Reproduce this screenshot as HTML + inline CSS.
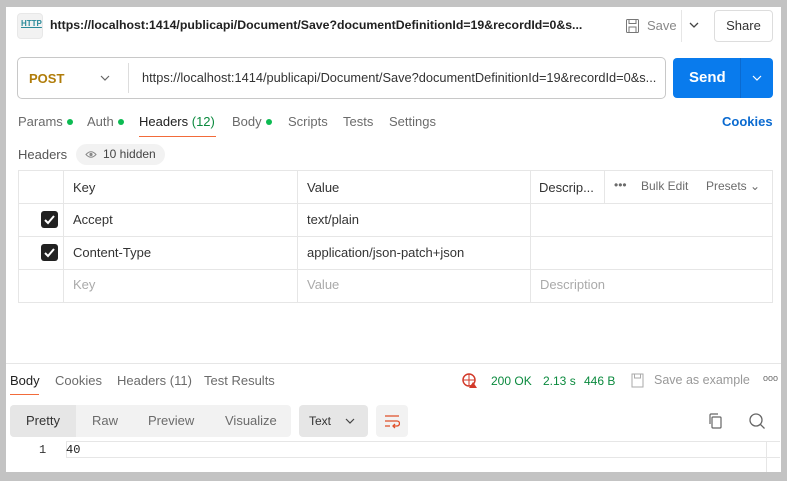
<!DOCTYPE html>
<html><head><meta charset="utf-8"><style>
*{margin:0;padding:0;box-sizing:border-box}
body{width:787px;height:481px;background:#c3c3c3;font-family:"Liberation Sans",sans-serif;position:relative;overflow:hidden;color:#212121}
.w{position:absolute;left:6px;top:7px;width:775px;height:465px;background:#fff}
.a{position:absolute;white-space:nowrap}
.g{color:#6b6b6b}
.dot{display:inline-block;width:6px;height:6px;border-radius:50%;background:#0cbb52;margin-left:4px;vertical-align:1px}
</style></head><body>
<div class="w"></div>
<div class="a" style="left:17px;top:13px;width:26px;height:26px;border-radius:4px;background:#f2f2f2;border:1px solid #e8e8e8"></div>
<div class="a" style="left:21px;top:19px;font-size:8px;color:#2a8a9a;font-weight:bold;text-decoration:underline">HTTP</div>
<div class="a" style="left:50px;top:18px;font-size:12.3px;font-weight:bold;color:#212121">https://localhost:1414/publicapi/Document/Save?documentDefinitionId=19&amp;recordId=0&amp;s...</div>
<svg class="a" style="left:625px;top:18px" width="16" height="16"><rect x="1.5" y="1.5" width="12" height="13" rx="1" fill="none" stroke="#777"/><rect x="4" y="1.5" width="7" height="4" fill="none" stroke="#777"/><rect x="4" y="9" width="7" height="5.5" fill="none" stroke="#777"/></svg>
<div class="a g" style="left:647px;top:18px;font-size:13px;color:#888">Save</div>
<div class="a" style="left:681px;top:10px;width:1px;height:32px;background:#e6e6e6"></div>
<svg class="a" style="left:689px;top:21px" width="10" height="8"><path d="M1 2l4 4 4-4" fill="none" stroke="#444" stroke-width="1.3"/></svg>
<div class="a" style="left:714px;top:10px;width:59px;height:32px;border:1px solid #ddd;border-radius:4px;font-size:13px;text-align:center;line-height:30px;color:#333">Share</div>
<div class="a" style="left:17px;top:57px;width:649px;height:42px;border:1px solid #c8c8c8;border-radius:5px"></div>
<div class="a" style="left:29px;top:71px;font-size:13px;font-weight:bold;color:#b07c09">POST</div>
<svg class="a" style="left:100px;top:74px" width="10" height="8"><path d="M1 2l4 4 4-4" fill="none" stroke="#666" stroke-width="1.2"/></svg>
<div class="a" style="left:128px;top:63px;width:1px;height:30px;background:#ddd"></div>
<div class="a" style="left:142px;top:70px;font-size:12.8px;color:#333">https://localhost:1414/publicapi/Document/Save?documentDefinitionId=19&amp;recordId=0&amp;s...</div>
<div class="a" style="left:673px;top:58px;width:100px;height:40px;background:#097bed;border-radius:4px"></div>
<div class="a" style="left:740px;top:58px;width:1px;height:40px;background:#0a6ad0"></div>
<div class="a" style="left:689px;top:69px;font-size:15px;font-weight:bold;color:#fff;line-height:18px">Send</div>
<svg class="a" style="left:752px;top:74px" width="10" height="8"><path d="M1 2l4 4 4-4" fill="none" stroke="#fff" stroke-width="1.2"/></svg>
<div class="a g" style="left:18px;top:114px;font-size:13px">Params<span class="dot"></span></div>
<div class="a g" style="left:87px;top:114px;font-size:13px">Auth<span class="dot"></span></div>
<div class="a" style="left:139px;top:114px;font-size:13px;color:#212121">Headers <span style="color:#0b8a3e">(12)</span></div>
<div class="a" style="left:139px;top:136px;width:77px;height:1px;background:#f26b3a"></div>
<div class="a g" style="left:232px;top:114px;font-size:13px">Body<span class="dot"></span></div>
<div class="a g" style="left:288px;top:114px;font-size:13px">Scripts</div>
<div class="a g" style="left:343px;top:114px;font-size:13px">Tests</div>
<div class="a g" style="left:389px;top:114px;font-size:13px">Settings</div>
<div class="a" style="left:722px;top:114px;font-size:13px;font-weight:bold;color:#0a6ad0">Cookies</div>
<div class="a g" style="left:18px;top:147px;font-size:13px;color:#555">Headers</div>
<div class="a" style="left:76px;top:144px;width:89px;height:21px;border-radius:11px;background:#f2f2f2"></div>
<svg class="a" style="left:85px;top:150px" width="12" height="9"><path d="M1 4.5Q6 -1 11 4.5Q6 10 1 4.5Z" fill="none" stroke="#888"/><circle cx="6" cy="4.5" r="1.6" fill="#888"/></svg>
<div class="a" style="left:103px;top:147px;font-size:12px;color:#444">10 hidden</div>
<div class="a" style="left:18px;top:170px;width:755px;height:133px;border:1px solid #e6e6e6"></div>
<div class="a" style="left:18px;top:203px;width:755px;height:1px;background:#e6e6e6"></div>
<div class="a" style="left:18px;top:236px;width:755px;height:1px;background:#e6e6e6"></div>
<div class="a" style="left:18px;top:269px;width:755px;height:1px;background:#e6e6e6"></div>
<div class="a" style="left:63px;top:170px;width:1px;height:133px;background:#e6e6e6"></div>
<div class="a" style="left:297px;top:170px;width:1px;height:133px;background:#e6e6e6"></div>
<div class="a" style="left:530px;top:170px;width:1px;height:133px;background:#e6e6e6"></div>
<div class="a" style="left:604px;top:170px;width:1px;height:33px;background:#e6e6e6"></div>
<div class="a" style="left:73px;top:180px;font-size:13px;color:#333">Key</div>
<div class="a" style="left:307px;top:180px;font-size:13px;color:#333">Value</div>
<div class="a" style="left:539px;top:180px;font-size:13px;color:#333">Descrip...</div>
<div class="a g" style="left:614px;top:178px;font-size:12px">•••</div>
<div class="a g" style="left:641px;top:179px;font-size:12px">Bulk Edit</div>
<div class="a g" style="left:706px;top:179px;font-size:12px">Presets ⌄</div>
<div class="a" style="left:41px;top:211px;width:17px;height:17px;background:#212121;border-radius:3px"></div>
<svg class="a" style="left:41px;top:211px" width="17" height="17"><path d="M4 9l3 3 6-7" fill="none" stroke="#fff" stroke-width="2"/></svg>
<div class="a" style="left:41px;top:244px;width:17px;height:17px;background:#212121;border-radius:3px"></div>
<svg class="a" style="left:41px;top:244px" width="17" height="17"><path d="M4 9l3 3 6-7" fill="none" stroke="#fff" stroke-width="2"/></svg>
<div class="a" style="left:73px;top:212px;font-size:13px;color:#333">Accept</div>
<div class="a" style="left:307px;top:212px;font-size:13px;color:#333">text/plain</div>
<div class="a" style="left:73px;top:245px;font-size:13px;color:#333">Content-Type</div>
<div class="a" style="left:307px;top:245px;font-size:13px;color:#333">application/json-patch+json</div>
<div class="a" style="left:73px;top:277px;font-size:13px;color:#aaa">Key</div>
<div class="a" style="left:307px;top:277px;font-size:13px;color:#aaa">Value</div>
<div class="a" style="left:540px;top:277px;font-size:13px;color:#aaa">Description</div>
<div class="a" style="left:6px;top:363px;width:775px;height:1px;background:#e6e6e6"></div>
<div class="a" style="left:10px;top:373px;font-size:13px;color:#212121">Body</div>
<div class="a" style="left:10px;top:394px;width:29px;height:1px;background:#f26b3a"></div>
<div class="a g" style="left:55px;top:373px;font-size:13px">Cookies</div>
<div class="a g" style="left:117px;top:373px;font-size:13px">Headers (11)</div>
<div class="a g" style="left:204px;top:373px;font-size:13px">Test Results</div>
<svg class="a" style="left:462px;top:373px" width="16" height="16"><circle cx="7" cy="7" r="6" fill="none" stroke="#d23a2a" stroke-width="1.5"/><path d="M1 7h12M7 1v12" stroke="#d23a2a"/><path d="M11 9l4 6h-8z" fill="#d23a2a"/></svg>
<div class="a" style="left:491px;top:374px;font-size:12px;color:#0b8a3e">200 OK</div>
<div class="a" style="left:543px;top:374px;font-size:12px;color:#0b8a3e">2.13 s</div>
<div class="a" style="left:584px;top:374px;font-size:12px;color:#0b8a3e">446 B</div>
<svg class="a" style="left:631px;top:373px" width="14" height="15"><rect x="1" y="1" width="11" height="13" fill="none" stroke="#aaa"/><rect x="3.5" y="1" width="6" height="4" fill="none" stroke="#aaa"/></svg>
<div class="a" style="left:654px;top:373px;font-size:12.5px;color:#999">Save as example</div>
<div class="a g" style="left:763px;top:373px;font-size:9px">ooo</div>
<div class="a" style="left:10px;top:405px;width:281px;height:32px;background:#f2f2f2;border-radius:4px"></div>
<div class="a" style="left:10px;top:405px;width:66px;height:32px;background:#e6e6e6;border-radius:4px 0 0 4px"></div>
<div class="a" style="left:26px;top:413px;font-size:13px;color:#333">Pretty</div>
<div class="a g" style="left:92px;top:413px;font-size:13px">Raw</div>
<div class="a g" style="left:148px;top:413px;font-size:13px">Preview</div>
<div class="a g" style="left:225px;top:413px;font-size:13px">Visualize</div>
<div class="a" style="left:299px;top:405px;width:69px;height:32px;background:#e6e6e6;border-radius:4px"></div>
<div class="a" style="left:309px;top:414px;font-size:12px;color:#333">Text</div>
<svg class="a" style="left:345px;top:417px" width="10" height="8"><path d="M1 2l4 4 4-4" fill="none" stroke="#444" stroke-width="1.2"/></svg>
<div class="a" style="left:376px;top:405px;width:32px;height:32px;background:#f2f2f2;border-radius:4px"></div>
<svg class="a" style="left:384px;top:413px" width="16" height="16"><path d="M1 3h14M1 8h12a2.5 2.5 0 010 5H9M11 11l-2 2 2 2M1 13h5" fill="none" stroke="#e0502a" stroke-width="1.3"/></svg>
<svg class="a" style="left:708px;top:412px" width="16" height="18"><rect x="4" y="5" width="9" height="11" rx="1" fill="none" stroke="#666" stroke-width="1.2"/><path d="M2 12V3a1 1 0 011-1h7" fill="none" stroke="#666" stroke-width="1.2"/></svg>
<svg class="a" style="left:748px;top:412px" width="18" height="18"><circle cx="8" cy="8" r="6" fill="none" stroke="#666" stroke-width="1.3"/><path d="M12.5 12.5l4 4" stroke="#666" stroke-width="1.3"/></svg>
<div class="a" style="left:66px;top:441px;width:714px;height:17px;border:1px solid #e6e6e6;border-right:none"></div>
<div class="a" style="left:766px;top:441px;width:1px;height:31px;background:#e6e6e6"></div>
<div class="a" style="left:39px;top:443px;font-size:12px;font-family:'Liberation Mono',monospace;color:#333">1</div>
<div class="a" style="left:66px;top:443px;font-size:12px;font-family:'Liberation Mono',monospace;color:#222">40</div>
</body></html>
